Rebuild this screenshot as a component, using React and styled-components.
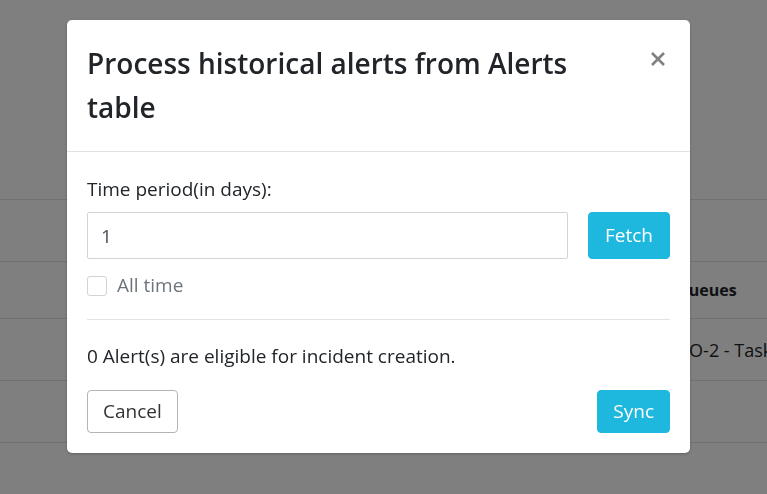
import React from 'react';
import styled, { createGlobalStyle } from 'styled-components';

const GlobalStyle = createGlobalStyle`
  html, body {
    margin: 0;
    padding: 0;
    background: #fff;
  }
  body {
    font-family: "Segoe UI", "Open Sans", "Liberation Sans", sans-serif;
    font-size: 19px;
    color: #212529;
  }
  * { box-sizing: border-box; }
`;

// page behind the modal
const Page = styled.div`
  width: 767px;
  height: 494px;
  overflow: hidden;
  background: #fff;
`;

const PageTop = styled.div`
  height: 199px;
`;

const Row = styled.div`
  display: grid;
  grid-template-columns: 676px 1fr;
  height: ${p => p.h || 62}px;
  border-top: 1px solid #dee2e6;
  align-items: center;
`;

const Cell = styled.div`
  white-space: nowrap;
  font-size: ${p => (p.head ? 16 : 18)}px;
  font-weight: ${p => (p.head ? 700 : 400)};
  color: #212529;
`;

// modal
const Overlay = styled.div`
  position: fixed;
  inset: 0;
  background: rgba(0, 0, 0, 0.5);
  padding: 20px 0 0 67px;
`;

const Modal = styled.div`
  width: 623px;
  background: #fff;
  border-radius: 5px;
  box-shadow: 0 1px 3px rgba(0, 0, 0, 0.25);
`;

const Header = styled.div`
  display: flex;
  justify-content: space-between;
  align-items: flex-start;
  padding: 21px 20px 22px 20px;
  border-bottom: 1px solid #dee2e6;
`;

const Title = styled.h4`
  margin: 0;
  font-size: 28px;
  font-weight: 600;
  line-height: 44px;
  color: #212529;
  max-width: 500px;
`;

const Close = styled.button`
  border: 0;
  background: none;
  padding: 0;
  margin: 10px 4px 0 0;
  cursor: pointer;
  display: flex;
`;

const Body = styled.div`
  padding: 24px 20px 20px 20px;
`;

const Label = styled.div`
  line-height: 27px;
  margin-bottom: 9px;
`;

const FieldRow = styled.div`
  display: flex;
  gap: 20px;
`;

const Input = styled.input`
  flex: 1;
  height: 47px;
  border: 1px solid #ced4da;
  border-radius: 2px;
  padding: 0 13px;
  font: inherit;
  font-size: 19px;
  color: #495057;
  outline: none;
`;

const Btn = styled.button`
  height: ${p => p.h || 43}px;
  padding: 0 ${p => p.px || 15}px;
  border-radius: 4px;
  font: inherit;
  font-size: 19px;
  line-height: 1;
  cursor: pointer;
  border: 1px solid ${p => (p.info ? '#1eb8df' : '#b4b4b4')};
  background: ${p => (p.info ? '#1eb8df' : '#fff')};
  color: ${p => (p.info ? '#fff' : '#333')};
`;

const CheckRow = styled.label`
  display: flex;
  align-items: center;
  gap: 10px;
  margin-top: 13px;
  line-height: 27px;
  color: #6c757d;
`;

const Box = styled.span`
  width: 20px;
  height: 20px;
  border: 1px solid #ced4da;
  border-radius: 3px;
  background: #fff;
`;

const Divider = styled.hr`
  border: 0;
  border-top: 1px solid #e3e3e3;
  margin: 20px 0 0 0;
`;

const Info = styled.p`
  margin: 23px 0 0 0;
  line-height: 27px;
`;

const Footer = styled.div`
  display: flex;
  justify-content: space-between;
  margin-top: 20px;
`;

export default function App() {
  return (
    <>
      <GlobalStyle />
      <Page>
        <PageTop />
        <Row h={62}><Cell /><Cell /></Row>
        <Row h={57}><Cell /><Cell head>Queues</Cell></Row>
        <Row h={62}><Cell /><Cell>GO-2 - Tasks</Cell></Row>
        <Row h={62}><Cell /><Cell /></Row>
        <Row h={62}><Cell /><Cell /></Row>
      </Page>
      <Overlay>
        <Modal>
          <Header>
            <Title>Process historical alerts from Alerts table</Title>
            <Close aria-label="Close">
              <svg width="16" height="16" viewBox="0 0 16 16">
                <path d="M2 2 L14 14 M14 2 L2 14" stroke="#808080" strokeWidth="2.6" strokeLinecap="butt" />
              </svg>
            </Close>
          </Header>
          <Body>
            <Label>Time period(in days):</Label>
            <FieldRow>
              <Input defaultValue="1" />
              <Btn info h={47} px={16}>Fetch</Btn>
            </FieldRow>
            <CheckRow>
              <Box />
              All time
            </CheckRow>
            <Divider />
            <Info>0 Alert(s) are eligible for incident creation.</Info>
            <Footer>
              <Btn>Cancel</Btn>
              <Btn info>Sync</Btn>
            </Footer>
          </Body>
        </Modal>
      </Overlay>
    </>
  );
}
